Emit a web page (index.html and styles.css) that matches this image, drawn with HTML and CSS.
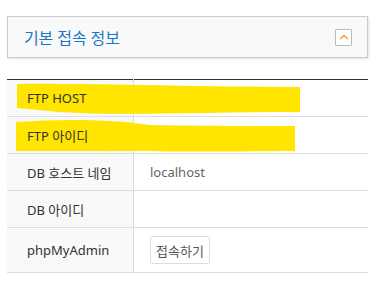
FILE: index.html
```html
<!DOCTYPE html>
<html lang="ko">
<head>
    <meta charset="UTF-8">
    <title>기본 접속 정보</title>
    <link rel="stylesheet" href="styles.css">
</head>
<body>
    <div class="panel">
        <div class="panel-head">
            <h2>기본 접속 정보</h2>
            <button class="toggle" type="button">
                <svg width="10" height="6" viewBox="0 0 10 6"><path d="M1 5 L5 1.5 L9 5" fill="none" stroke="#f7a21b" stroke-width="1.6"/></svg>
            </button>
        </div>

        <div class="info-wrap">
            <table class="info">
                <tr><th><span>FTP HOST</span></th><td></td></tr>
                <tr><th><span>FTP 아이디</span></th><td></td></tr>
                <tr><th><span>DB 호스트 네임</span></th><td>localhost</td></tr>
                <tr><th><span>DB 아이디</span></th><td></td></tr>
                <tr><th><span>phpMyAdmin</span></th><td><button class="btn" type="button">접속하기</button></td></tr>
            </table>
            <!-- marker highlights -->
            <svg class="marker" width="387" height="80" viewBox="0 0 387 80">
                <path d="M17 5 C80 4 200 8 300 8 L300 33 C200 33 120 37 60 33 L17 29 Z" fill="#ffe500"/>
                <path d="M16 43 C60 40 110 40 150 46 C200 47 260 47 295 47 L295 72 C220 73 100 72 16 72 Z" fill="#ffe500"/>
            </svg>
        </div>
    </div>
</body>
</html>
```

FILE: styles.css
```css
body {
    margin: 0;
    background: #fff;
    font-family: "Noto Sans", "Noto Sans CJK KR", sans-serif;
    color: #333;
}
.panel {
    padding: 16px 0 0 7px;
    width: 361px;
}
.panel-head {
    display: flex;
    align-items: center;
    justify-content: space-between;
    height: 40px;
    padding: 0 15px 0 16px;
    background: #f9f9f9;
    border: 1px solid #ccc;
    box-shadow: 1px 1px 2px rgba(0, 0, 0, 0.12);
}
.panel-head h2 {
    margin: 0;
    font-size: 16px;
    font-weight: normal;
    color: #1c76c8;
    letter-spacing: -0.1px;
}
.toggle {
    width: 17px;
    height: 17px;
    padding: 0;
    border: 1px solid #bbb;
    border-radius: 1px;
    background: #fff;
    display: flex;
    align-items: center;
    justify-content: center;
}
.info-wrap {
    position: relative;
    margin-top: 21px;
}
.info {
    width: 100%;
    border-collapse: collapse;
    border-top: 1px solid #333;
    font-size: 13px;
}
.info th, .info td {
    height: 36px;
    padding: 0;
    border-bottom: 1px solid #ddd;
    text-align: left;
}
.info th {
    width: 106px;
    padding-left: 20px;
    font-weight: normal;
    background: #f9f9f9;
    border-right: 1px solid #ddd;
    color: #333;
}
.info th span {
    position: relative;
    z-index: 2;
}
.info td {
    padding-left: 16px;
    color: #666;
}
.info tr:last-child th, .info tr:last-child td {
    height: 44px;
}
.btn {
    font-family: inherit;
    font-size: 13px;
    color: #555;
    background: #fff;
    border: 1px solid #ddd;
    border-radius: 2px;
    padding: 4px 5px;
    height: 28px;
}
.marker {
    position: absolute;
    left: -7px;
    top: 0;
    z-index: 1;
    pointer-events: none;
}
```
